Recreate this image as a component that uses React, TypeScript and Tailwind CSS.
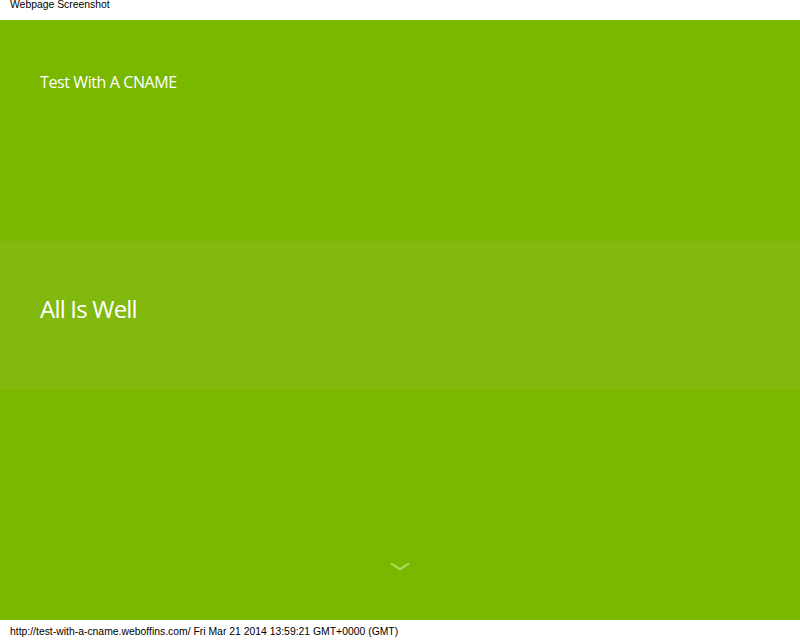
export default function App() {
  return (
    <div className="flex h-[640px] w-[800px] flex-col bg-white">
      {/* Top caption */}
      <div className="h-5 px-[10px] font-['Liberation_Sans',Arial,sans-serif] text-[10.4px] leading-[9px] text-black">
        Webpage Screenshot
      </div>

      {/* Page */}
      <div className="flex h-[600px] flex-col bg-[#7ab800] font-['Open_Sans',sans-serif] text-white">
        <header className="h-[221px] px-10 pt-[51px]">
          <h1 className="text-[16px] leading-[22px] tracking-[-0.4px]">Test With A CNAME</h1>
        </header>

        <section className="flex h-[149px] items-center bg-[#81b90f] px-10 pb-[14px]">
          <h2 className="text-[24px] leading-8 tracking-[-0.8px]">All Is Well</h2>
        </section>

        <div className="flex flex-1 items-end justify-center pb-[49px]">
          <svg width="20" height="9" viewBox="0 0 20 9" fill="none">
            <path d="M1 1.5 L10 7 L19 1.5" stroke="#b7da70" strokeWidth="2" />
          </svg>
        </div>
      </div>

      {/* Bottom caption */}
      <div className="flex h-5 items-end px-[10px] pb-[2px] font-['Liberation_Sans',Arial,sans-serif] text-[10.4px] leading-3 text-black">
        http://test-with-a-cname.weboffins.com/ Fri Mar 21 2014 13:59:21 GMT+0000 (GMT)
      </div>
    </div>
  );
}
